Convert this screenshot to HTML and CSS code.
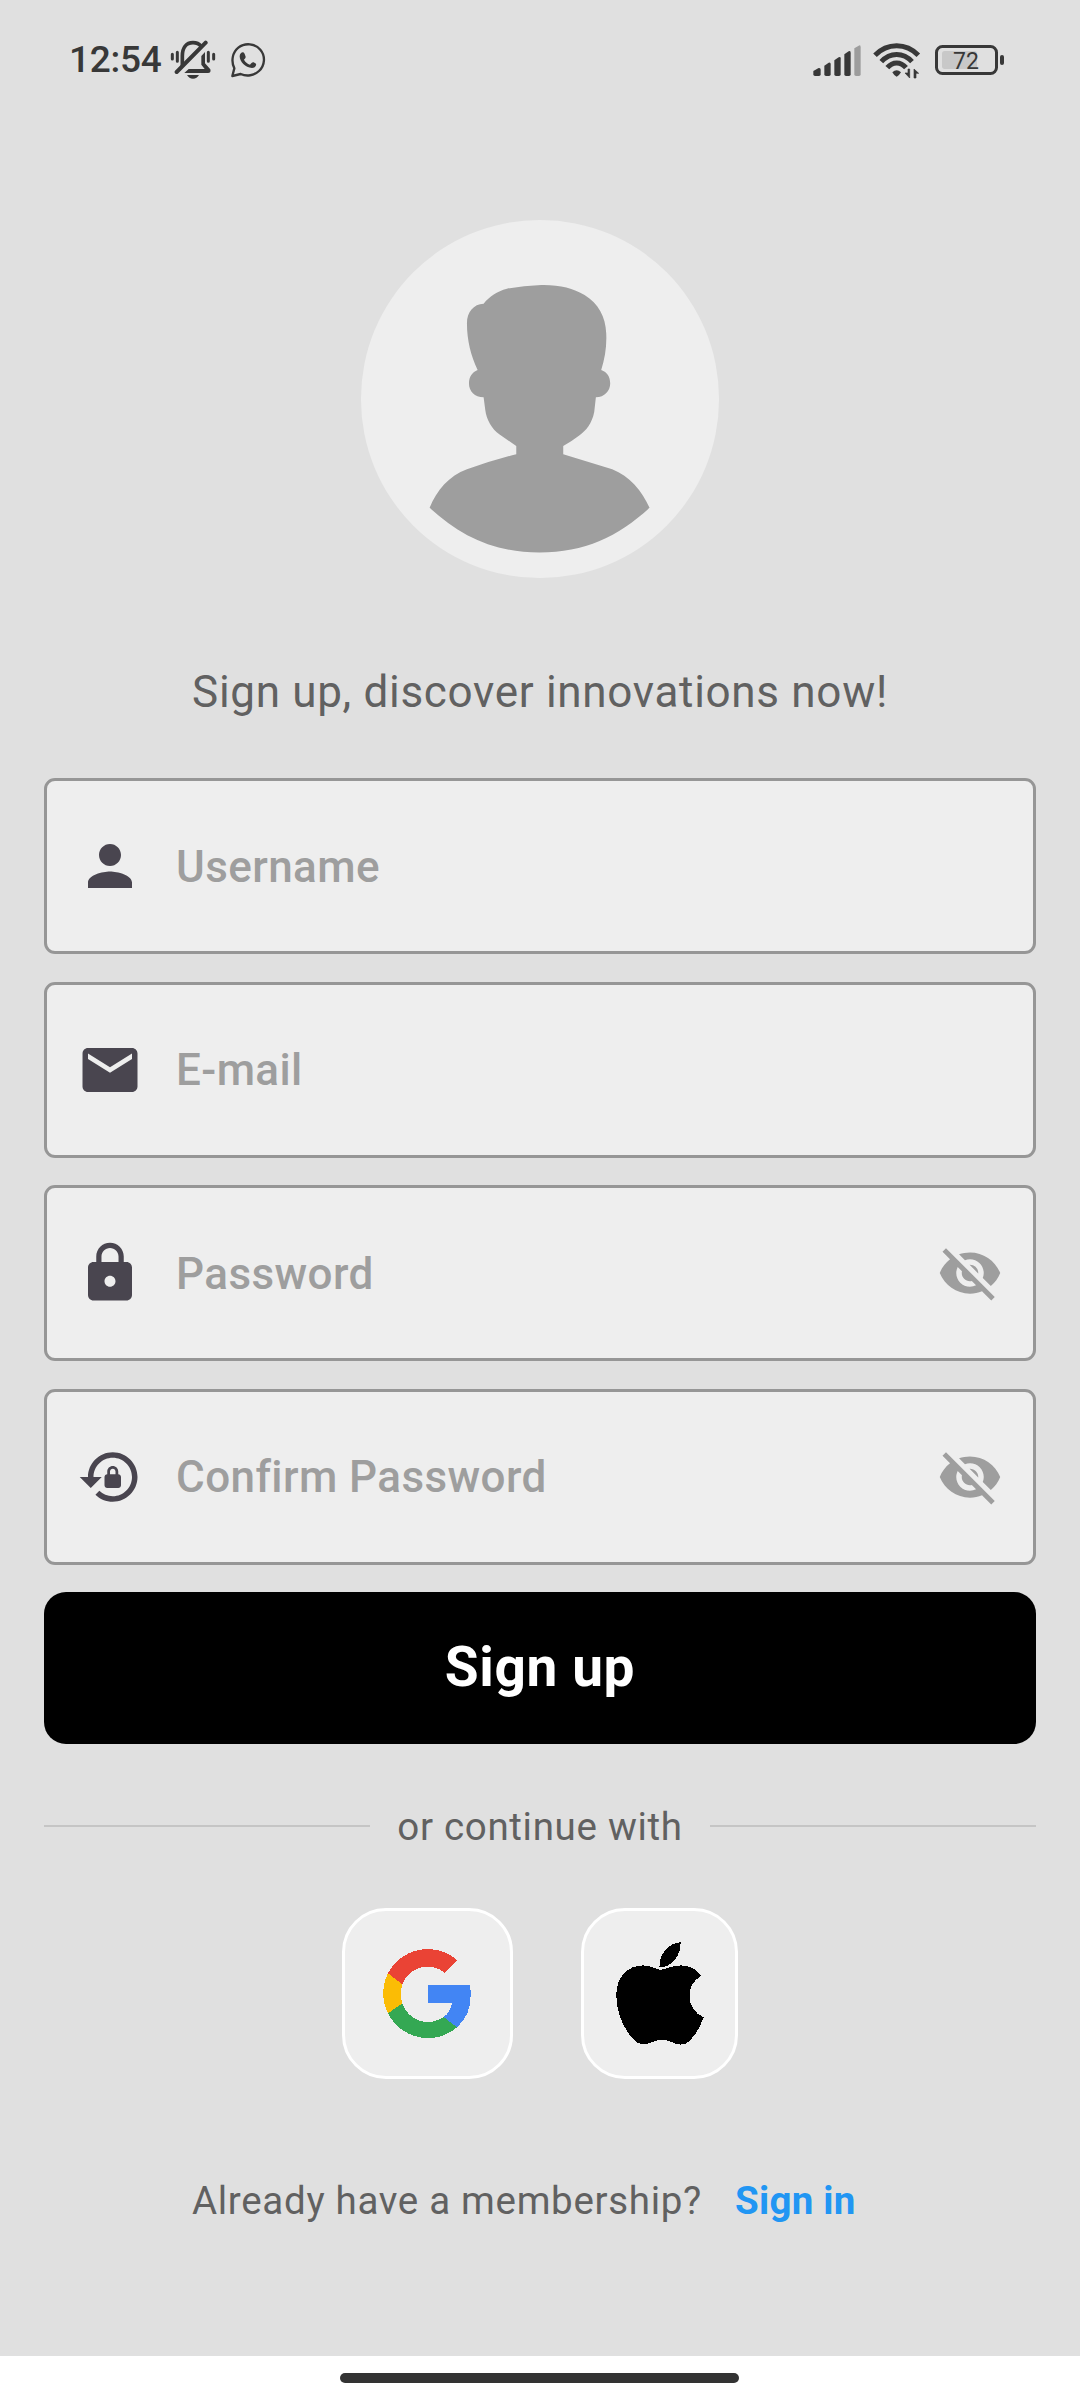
FILE: index.html
```html
<!DOCTYPE html>
<html lang="en">
<head>
<meta charset="utf-8">
<title>Sign up</title>
<link rel="stylesheet" href="styles.css">
</head>
<body>
<div class="screen">
  <header class="status">
    <span class="clock">12:54</span>
    <svg class="bell" viewBox="390 60 138 120" fill="none" stroke="#383838" stroke-width="9" stroke-linecap="round">
      <path d="M397 103v14M412 97v27M505 97v27M521 103v14"/>
      <path d="M427 139V108C427 84 438 68 459 68C469 68 478 72 484 79" stroke-width="11" stroke-linecap="butt"/>
      <path d="M410 156L497 68" stroke-width="12"/>
      <path d="M484 108L495 96V130L511 148Q514 159 504 159H433L446 147H494L484 134Z" fill="#383838" stroke="none"/>
      <path d="M441 165H477Q471 176 459 176Q447 176 441 165Z" fill="#383838" stroke="none"/>
    </svg>
    <svg class="whatsapp" viewBox="570 63 108 108">
      <path d="M577 165L583 142C572 119 578 94 595 80C615 64 645 67 661 86C677 105 675 133 657 150C642 164 620 167 602 159Z" fill="none" stroke="#383838" stroke-width="7" stroke-linejoin="round"/>
      <path d="M603 96C608 92 612 94 614 99L617 107C617 111 614 113 612 116C616 123 622 128 630 131C634 127 637 122 641 124L648 128C650 134 645 140 636 141C616 140 599 122 599 106Q599 100 603 96Z" fill="#383838"/>
    </svg>
    <svg class="signal" viewBox="96 69 150 99" fill="#383838">
      <path d="M100 150L116 141Q122 140 122 146V160Q122 165 117 165H105Q100 165 100 160Z"/>
      <path d="M133 134L146 125Q152 123 152 129V160Q152 165 147 165H138Q133 165 133 160Z"/>
      <path d="M163 118L176 109Q182 106 182 112V160Q182 165 177 165H168Q163 165 163 160Z"/>
      <path d="M193 100L206 91Q212 88 212 95V160Q212 165 207 165H198Q193 165 193 160Z"/>
      <path d="M223 82L236 74Q242 71 242 78V160Q242 165 237 165H228Q223 165 223 160Z" fill="#9d9d9d"/>
    </svg>
    <svg class="wifi" viewBox="279 63 144 111" fill="none" stroke="#383838" stroke-width="15">
      <path d="M285 103C322 65 378 65 415 103"/>
      <path d="M304 122C330 93 370 93 396 122"/>
      <path d="M322 140C338 121 362 121 378 140"/>
      <path d="M337 154Q350 142 363 154Q359 162 350 167Q341 162 337 154Z" fill="#383838" stroke="none"/>
      <path d="M389 144V171L375 156H384V144ZM402 171V144L416 157H408V171Z" fill="#383838" stroke="#383838" stroke-width="2"/>
    </svg>
    <svg class="battery" viewBox="462 69 213 96">
      <rect x="486" y="90" width="105" height="54" rx="8" fill="#c8c8c8"/>
      <rect x="469.500" y="76.500" width="180" height="81" rx="18" fill="none" stroke="#383838" stroke-width="9"/>
      <rect x="660" y="102" width="12" height="30" rx="6" fill="#383838"/>
      <text x="558" y="143" text-anchor="middle" class="level">72</text>
    </svg>
  </header>

  <main class="content">
    <div class="avatar">
      <svg viewBox="64 60 1073 1073">
        <path d="M432 311C450 289 472 274 502 266Q550 257 605 255C660 254 700 264 735 285C777 311 798 350 800 400C802 440 796 475 785 510C803 516 812 531 812 550C812 573 795 592 769 592L764 636C757 671 740 691 719 707Q696 725 671 738V763L818 808C870 829 908 873 930 924C836 1010 735 1058 600 1058C465 1058 364 1010 270 924C292 870 328 828 382 808Q455 782 530 763V738L480 704C456 686 441 660 437 630L432 592C405 592 388 574 388 550C388 531 398 516 414 510C394 467 382 422 382 370C382 336 402 312 432 311Z" fill="#9e9e9e"/>
      </svg>
    </div>
    <h1 class="tagline">Sign up, discover innovations now!</h1>

    <form class="form">
      <label class="field">
        <svg class="icon" viewBox="0 0 24 24"><path d="M12 12c2.210 0 4-1.790 4-4s-1.790-4-4-4-4 1.790-4 4 1.790 4 4 4zm0 2c-2.670 0-8 1.340-8 4v2h16v-2c0-2.660-5.330-4-8-4z"/></svg>
        <span class="hint">Username</span>
      </label>
      <label class="field">
        <svg class="icon" viewBox="0 0 24 24"><path d="M20 4H4c-1.100 0-1.990.9-1.990 2L2 18c0 1.100.9 2 2 2h16c1.100 0 2-.9 2-2V6c0-1.100-.9-2-2-2zm0 4l-8 5-8-5V6l8 5 8-5v2z"/></svg>
        <span class="hint">E-mail</span>
      </label>
      <label class="field">
        <svg class="icon" viewBox="0 0 24 24"><path d="M18 8h-1V6c0-2.760-2.240-5-5-5S7 3.240 7 6v2H6c-1.100 0-2 .9-2 2v10c0 1.100.9 2 2 2h12c1.100 0 2-.9 2-2V10c0-1.100-.9-2-2-2zm-6 9c-1.100 0-2-.9-2-2s.9-2 2-2 2 .9 2 2-.9 2-2 2zm3.100-9H8.900V6c0-1.710 1.390-3.100 3.100-3.100s3.100 1.390 3.100 3.100v2z"/></svg>
        <span class="hint">Password</span>
        <svg class="icon eye" viewBox="0 0 24 24"><path d="M12 7c2.760 0 5 2.240 5 5 0 .65-.13 1.260-.36 1.830l2.920 2.920c1.510-1.260 2.700-2.890 3.430-4.750-1.730-4.390-6-7.500-11-7.500-1.400 0-2.740.25-3.980.7l2.160 2.160C10.740 7.130 11.350 7 12 7zM2 4.270l2.280 2.280.46.46C3.080 8.300 1.780 10.020 1 12c1.730 4.390 6 7.500 11 7.500 1.550 0 3.030-.3 4.380-.84l.42.42L19.730 22 21 20.730 3.270 3 2 4.270zM7.530 9.800l1.550 1.550c-.05.21-.08.43-.08.65 0 1.660 1.340 3 3 3 .22 0 .44-.03.65-.08l1.550 1.550c-.67.33-1.410.53-2.200.53-2.760 0-5-2.240-5-5 0-.79.2-1.530.53-2.200zm4.310-.78l3.150 3.150.02-.16c0-1.660-1.340-3-3-3l-.17.01z"/></svg>
      </label>
      <label class="field">
        <svg class="icon" viewBox="0 0 24 24"><path d="M13 3c-4.970 0-9 4.030-9 9H1l4 4 4-4H6c0-3.860 3.140-7 7-7s7 3.140 7 7-3.140 7-7 7c-1.900 0-3.620-.76-4.880-1.990L6.700 18.420C8.320 20.010 10.550 21 13 21c4.970 0 9-4.030 9-9s-4.030-9-9-9zm2 8v-1c0-1.100-.9-2-2-2s-2 .9-2 2v1c-.55 0-1 .45-1 1v3c0 .55.45 1 1 1h4c.55 0 1-.45 1-1v-3c0-.55-.45-1-1-1zm-1 0h-2v-1c0-.55.45-1 1-1s1 .45 1 1v1z"/></svg>
        <span class="hint">Confirm Password</span>
        <svg class="icon eye" viewBox="0 0 24 24"><path d="M12 7c2.760 0 5 2.240 5 5 0 .65-.13 1.260-.36 1.830l2.920 2.920c1.510-1.260 2.700-2.890 3.430-4.750-1.730-4.390-6-7.500-11-7.500-1.400 0-2.740.25-3.980.7l2.160 2.160C10.740 7.130 11.350 7 12 7zM2 4.270l2.280 2.280.46.46C3.080 8.300 1.780 10.020 1 12c1.730 4.390 6 7.500 11 7.500 1.550 0 3.030-.3 4.380-.84l.42.42L19.730 22 21 20.730 3.270 3 2 4.270zM7.530 9.800l1.550 1.550c-.05.21-.08.43-.08.65 0 1.660 1.340 3 3 3 .22 0 .44-.03.65-.08l1.550 1.550c-.67.33-1.410.53-2.200.53-2.760 0-5-2.240-5-5 0-.79.2-1.530.53-2.200zm4.310-.78l3.150 3.150.02-.16c0-1.660-1.340-3-3-3l-.17.01z"/></svg>
      </label>
      <button class="submit" type="button">Sign up</button>
    </form>

    <div class="divider"><span class="divider-text">or continue with</span></div>

    <div class="social">
      <button class="tile google" type="button" aria-label="Google">
        <svg viewBox="189 507 264 267" shape-rendering="crispEdges">
          <path d="M204 580A134 134 0 0 1 412 541L375 579A81 81 0 0 0 247 613Z" fill="#ea4335"/>
          <path d="M204 580A134 134 0 0 0 204 700L247 670A90 90 0 0 1 247 613Z" fill="#fbbc05"/>
          <path d="M204 700A134 134 0 0 0 411 742L371 711A81 81 0 0 1 247 670Z" fill="#34a853"/>
          <path d="M324 615H450C457 665 448 710 411 742L371 711Q392 696 396 669H324Z" fill="#4285f4"/>
        </svg>
      </button>
      <button class="tile apple" type="button" aria-label="Apple">
        <svg viewBox="887 488 263 308" shape-rendering="crispEdges">
          <path d="M1080 489C1082 528 1053 565 1017 564C1014 527 1043 490 1080 489Z"/>
          <path d="M1020 571C1036 571 1053 558 1082 558C1108 558 1131 572 1142 589C1117 605 1107 622 1107 650C1107 680 1123 702 1149 713C1141 739 1127 761 1112 778C1092 802 1071 796 1051 786C1032 778 1015 779 996 787C973 797 955 798 939 779C908 746 887 695 888 645C888 593 922 558 968 558C991 558 1007 571 1020 571Z"/>
        </svg>
      </button>
    </div>

    <p class="member"><span>Already have a membership?</span><a class="signin">Sign in</a></p>
  </main>

  <footer class="navbar"><div class="handle"></div></footer>
</div>
</body>
</html>
```
FILE: styles.css
```css
* { box-sizing: border-box; }
body { margin: 0; font-family: Roboto, sans-serif; }
svg { display: block; flex: none; }
.screen { width: 1080px; height: 2400px; background: #e0e0e0; display: flex; flex-direction: column; overflow: hidden; }

.status { height: 120px; padding: 0 75px 0 69px; display: flex; align-items: center; }
.clock { width: 101px; font-size: 37px; font-weight: 500; line-height: 44px; letter-spacing: -0.3px; color: #383838; white-space: nowrap; }
.bell { width: 46px; height: 40px; }
.whatsapp { width: 36px; height: 36px; margin-left: 14px; }
.signal { width: 50px; height: 33px; margin-left: auto; }
.wifi { width: 48px; height: 37px; margin-left: 11px; }
.battery { width: 71px; height: 32px; margin-left: 13px; }
.level { font-size: 69px; fill: #383838; }

.content { flex: 1; padding: 100px 44px 0; display: flex; flex-direction: column; }
.avatar { width: 357.5px; height: 357.5px; align-self: center; border-radius: 50%; background: #eee; overflow: hidden; }
.avatar svg { width: 100%; height: 100%; }
.tagline { margin: 88px 0 0; font-size: 44px; font-weight: 400; line-height: 52px; letter-spacing: 0.69px; color: #616161; text-align: center; white-space: nowrap; }

.form { margin-top: 60.75px; display: flex; flex-direction: column; gap: 27.5px; }
.field { height: 176px; padding: 0 30px; display: flex; align-items: center; border: 3px solid #969696; border-radius: 11px; background: #eee; }
.icon { width: 66px; height: 66px; fill: #49454f; }
.eye { margin-left: auto; fill: #9e9e9e; }
.hint { margin-left: 33px; padding-top: 1px; font-size: 44px; font-weight: 500; line-height: 52px; letter-spacing: 0.41px; color: #9e9e9e; white-space: nowrap; }
.submit { height: 151.25px; padding: 0 0 2px; border: 0; border-radius: 22px; background: #000; color: #fff; font: 700 55px/64px Roboto, sans-serif; letter-spacing: 0.6px; }

.divider { height: 54px; margin-top: 55px; display: flex; align-items: center; gap: 27.5px; }
.divider::before, .divider::after { content: ""; flex: 1; height: 2px; background: #c5c5c5; }
.divider-text { padding-top: 2px; font-size: 38.5px; line-height: 52px; letter-spacing: 0.69px; color: #616161; white-space: nowrap; }

.social { margin-top: 55px; display: flex; justify-content: center; gap: 68px; }
.tile { height: 171px; padding: 0; display: flex; align-items: center; justify-content: center; border: 3px solid #fff; border-radius: 44px; background: #eee; }
.google { width: 171px; padding-right: 2px; }
.google svg { width: 88px; height: 89px; }
.apple { width: 157px; }
.apple svg { width: 88px; height: 103px; }

.member { margin: 95px 0 0 148px; display: flex; gap: 33px; font-size: 38.5px; line-height: 54px; letter-spacing: 0.69px; color: #616161; white-space: nowrap; }
.signin { color: #2196f3; font-weight: 700; letter-spacing: 0.27px; }

.navbar { height: 44px; background: #fff; display: flex; justify-content: center; padding: 17px 1px 0 0; }
.handle { width: 399px; height: 10px; border-radius: 5px; background: #333; }
```
